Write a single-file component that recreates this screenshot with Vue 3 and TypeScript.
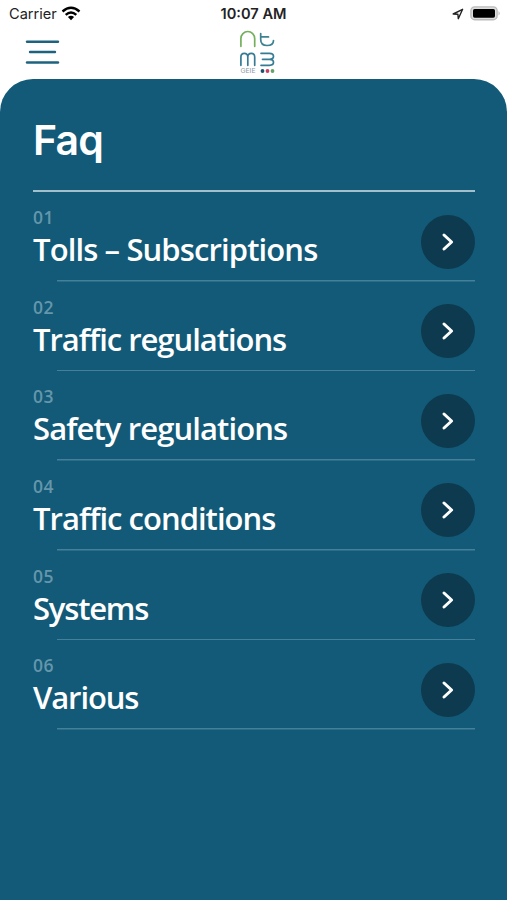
<script setup lang="ts">
interface Topic {
  id: string
  title: string
  spacing: number
}

const topics: Topic[] = [
  { id: '01', title: 'Tolls – Subscriptions', spacing: -0.88 },
  { id: '02', title: 'Traffic regulations', spacing: -1.03 },
  { id: '03', title: 'Safety regulations', spacing: -0.9 },
  { id: '04', title: 'Traffic conditions', spacing: -0.98 },
  { id: '05', title: 'Systems', spacing: -1.2 },
  { id: '06', title: 'Various', spacing: -1.1 },
]
</script>

<template>
  <div class="screen">
    <div class="status">
      <div class="status-left">
        <span class="carrier">Carrier</span>
        <svg class="wifi" width="20" height="15" viewBox="0 0 20 15">
          <g fill="none" stroke="#000" stroke-width="2.4">
            <path d="M1.5 5.5 Q10 -2 18.500 5.500" />
            <path d="M4.700 8.900 Q10 4 15.300 8.900" />
          </g>
          <path d="M10 14.200 L6.900 11 Q10 8.500 13.100 11 Z" />
        </svg>
      </div>
      <span class="clock">10:07 AM</span>
      <div class="status-right">
        <svg width="12" height="12" viewBox="0 0 12 12">
          <path d="M1.200 6 L10.600 1.300 L6.300 10.700 L5.900 6.200 Z" fill="none" stroke="#222" stroke-width="1.400" stroke-linejoin="round" />
        </svg>
        <svg width="31" height="15" viewBox="0 0 31 15">
          <rect x="0.900" y="0.900" width="26.200" height="12.800" rx="3.800" fill="#ddd" stroke="#bbb" stroke-width="1.400" />
          <rect x="3" y="2.900" width="22" height="8.800" rx="1.600" fill="#000" />
          <path d="M28.600 5 Q30.600 7.300 28.600 9.600 Z" fill="#aaa" />
        </svg>
      </div>
    </div>

    <header class="bar">
      <button class="menu" aria-label="Menu">
        <svg width="36" height="26" viewBox="0 0 36 26">
          <g stroke="#1d6380" stroke-width="2.400" stroke-linecap="round">
            <path d="M2 2.700H33" />
            <path d="M5 13H30" />
            <path d="M2 23.500H33" />
          </g>
        </svg>
      </button>
      <svg class="logo" width="38" height="46" viewBox="0 0 38 46">
        <g fill="none" stroke-width="1.700" stroke-linecap="round" stroke-linejoin="round">
          <path d="M2.900 17.300V9.500A6.900 7 0 0 1 16.700 9.500V17.300" stroke="#74b05c" />
          <path d="M22.700 4.500V10.500Q22.700 16.500 29 16.500Q35.500 16.500 35.500 11.500M22.700 7.900H30.500" stroke="#3d8293" />
          <path d="M2.900 36.300V28Q2.900 24.300 6.300 24.300Q9.800 24.300 9.800 28V36.300M9.800 28Q9.800 24.300 13.300 24.300Q16.700 24.300 16.700 28V36.300" stroke="#367b94" />
          <path d="M23 24.300H31.500Q35.500 24.300 35.500 27.300Q35.500 30.300 31.500 30.300H24.500M31.500 30.300Q35.500 30.300 35.500 33.300Q35.500 36.300 31.500 36.300H23" stroke="#367b94" />
        </g>
        <text x="2.500" y="43.900" textLength="15" lengthAdjust="spacingAndGlyphs" font-size="6" font-family="Inter, sans-serif" fill="#8a9ba3">GEIE</text>
        <circle cx="24.500" cy="42" r="1.900" fill="#17516d" />
        <circle cx="29.500" cy="42" r="1.900" fill="#c83e60" />
        <circle cx="34.500" cy="42" r="1.900" fill="#60a468" />
      </svg>
    </header>

    <main class="panel">
      <h1>Faq</h1>
      <ul class="topics">
        <li v-for="topic in topics" :key="topic.id" class="topic">
          <div class="label">
            <span class="num">{{ topic.id }}</span>
            <span class="title" :style="{ letterSpacing: topic.spacing + 'px' }">{{ topic.title }}</span>
          </div>
          <span class="go">
            <svg width="14" height="20" viewBox="0 0 14 20">
              <path d="M3 3L10.600 10L3 17" fill="none" stroke="#fff" stroke-width="3" stroke-linecap="round" stroke-linejoin="round" />
            </svg>
          </span>
        </li>
      </ul>
    </main>
  </div>
</template>

<style>
body {
  margin: 0;
  background: #fff;
}
</style>

<style scoped>
.screen {
  width: 507px;
  height: 900px;
  display: flex;
  flex-direction: column;
  overflow: hidden;
  font-family: Inter, "Liberation Sans", sans-serif;
}
.status {
  height: 27px;
  display: grid;
  grid-template-columns: 1fr auto 1fr;
  align-items: center;
  padding: 0 6px 0 9px;
  box-sizing: border-box;
  font-size: 14.600px;
  color: #222;
}
.status-left,
.status-right {
  display: flex;
  align-items: center;
  gap: 6px;
}
.status-left {
  gap: 4px;
}
.status-right {
  justify-content: flex-end;
}
.clock {
  font-weight: 600;
  margin-right: 3px;
}
.bar {
  height: 52px;
  display: grid;
  grid-template-columns: 1fr auto 1fr;
  align-items: start;
}
.menu {
  width: 36px;
  height: 26px;
  margin: 12px 0 0 24.500px;
  padding: 0;
  border: 0;
  background: none;
}
.menu svg,
.logo {
  display: block;
}
.logo {
  margin: 2px 0 0 6px;
}
.panel {
  flex: 1;
  background: #125a77;
  border-radius: 33px 33px 0 0;
  padding: 0 32px 0 33px;
  color: #fff;
}
h1 {
  margin: 0;
  height: 113px;
  box-sizing: border-box;
  padding-top: 36px;
  font-size: 41px;
  line-height: 50px;
  font-weight: 600;
  letter-spacing: -0.8px;
  border-bottom: 2px solid #a2c0cc;
}
.topics {
  list-style: none;
  margin: 0;
  padding: 0;
}
.topic {
  height: 89.650px;
  display: flex;
  justify-content: space-between;
  align-items: flex-start;
  box-sizing: border-box;
  background: linear-gradient(#44809a, #44809a) 24px 100% / 100% 1.500px no-repeat;
}
.label {
  display: flex;
  flex-direction: column;
  padding-top: 15px;
}
.num {
  font-family: "Open Sans", Inter, sans-serif;
  font-size: 17.500px;
  line-height: 20px;
  font-weight: 600;
  letter-spacing: 0.600px;
  color: #6596ab;
}
.title {
  margin-top: 3px;
  font-family: "Open Sans", Inter, sans-serif;
  font-size: 31px;
  line-height: 38px;
  font-weight: 650;
  white-space: nowrap;
}
.go {
  width: 54px;
  height: 54px;
  margin-top: 22.500px;
  border-radius: 50%;
  background: #0d3a4e;
  display: flex;
  align-items: center;
  justify-content: center;
}
</style>
